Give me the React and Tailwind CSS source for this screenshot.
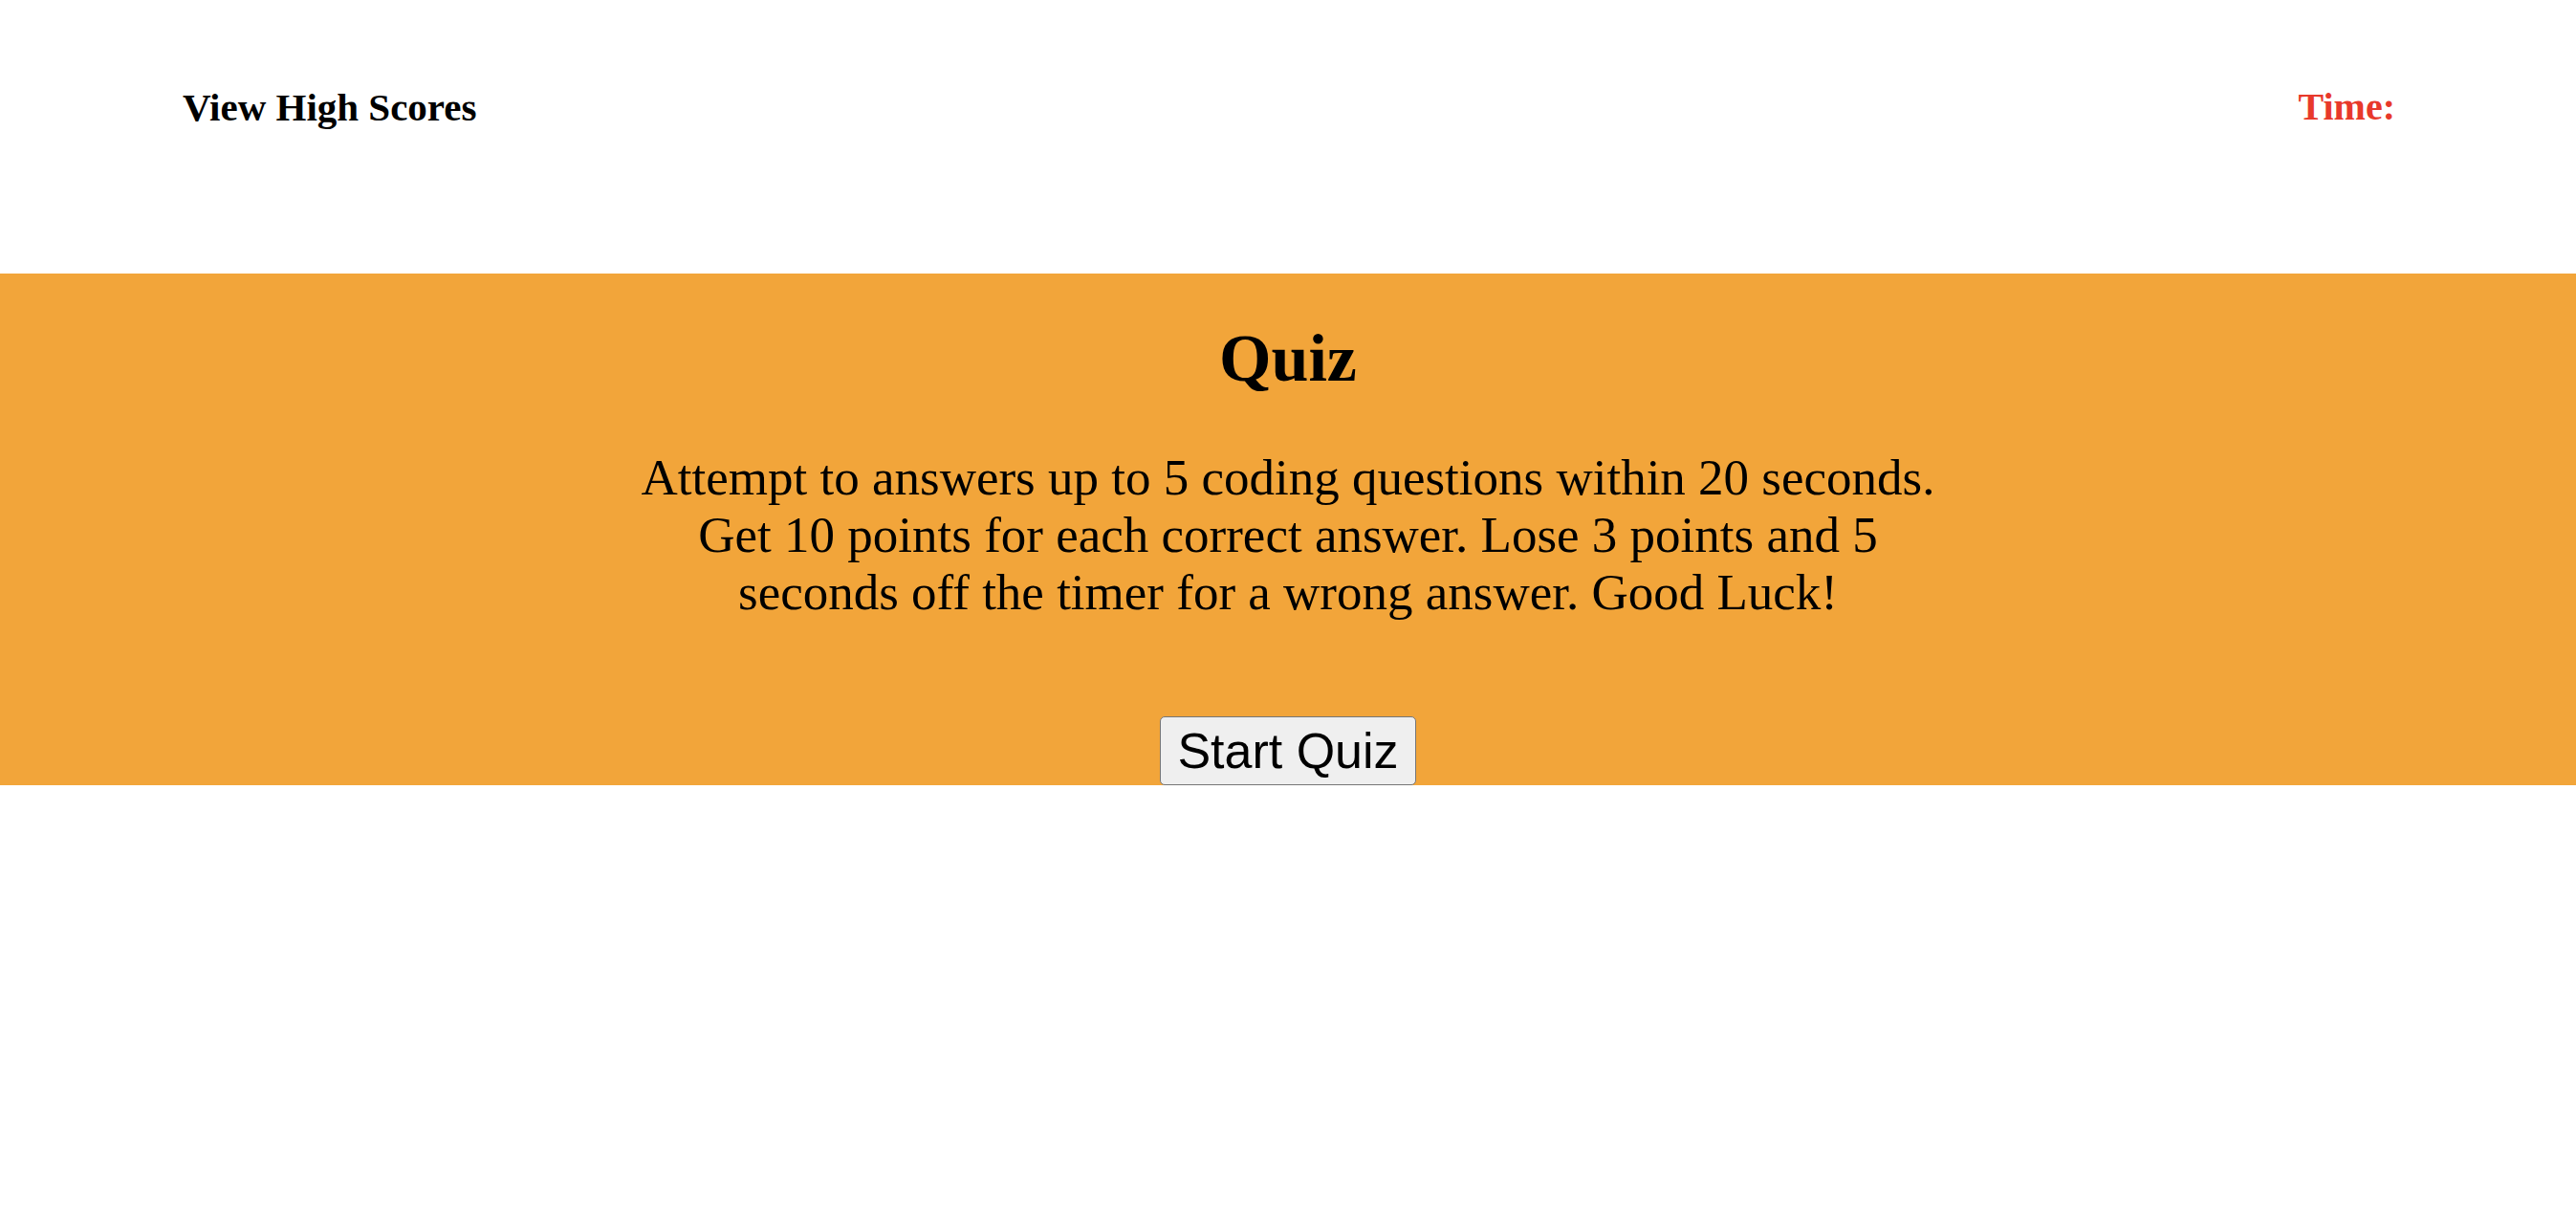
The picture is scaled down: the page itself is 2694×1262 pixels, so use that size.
import React from 'react';

const App = () => {
  return (
    <div className="min-h-[1262px] bg-white font-['Liberation_Serif','Times_New_Roman',serif] text-black">
      {/* header */}
      <header className="h-[286px] pl-[191px] pr-[189px] pt-[89px] flex justify-between items-start">
        <a className="text-[41px] leading-[46px] font-bold cursor-pointer">View High Scores</a>
        <div className="text-[40px] leading-[46px] font-bold text-[#e8392b]">Time:</div>
      </header>

      {/* intro */}
      <section className="bg-[#f2a53a] flex flex-col items-center pt-[49px]">
        <h1 className="text-[70px] leading-[80px] font-bold">Quiz</h1>
        <p className="w-[1370px] mt-[54px] text-center text-[53px] leading-[60px]">
          Attempt to answers up to 5 coding questions within 20 seconds. Get 10 points for each correct answer. Lose 3 points and 5 seconds off the timer for a wrong answer. Good Luck!
        </p>
        <button className="mt-[100px] h-[72px] px-[17px] bg-[#efefef] border border-[#767676] rounded-[5px] font-['Liberation_Sans',Arial,sans-serif] text-[52px] leading-[60px]">
          Start Quiz
        </button>
      </section>
    </div>
  );
};

export default App;
